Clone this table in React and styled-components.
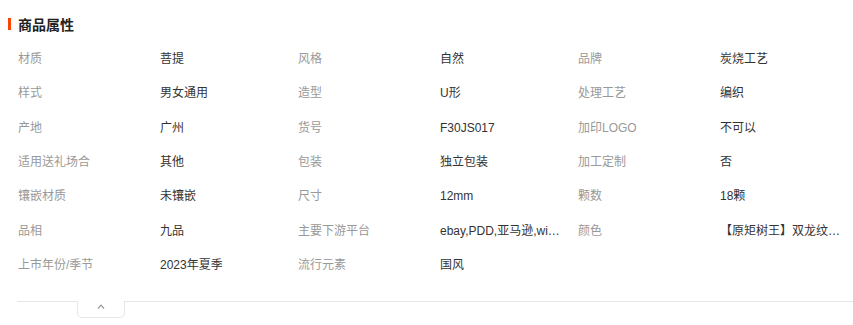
import React from "react";
import styled, { createGlobalStyle } from "styled-components";

const GlobalStyle = createGlobalStyle`
  html, body {
    margin: 0;
    padding: 0;
    background: #fff;
    font-family: "Liberation Sans", "Noto Sans CJK SC", sans-serif;
  }
`;

const Wrapper = styled.div`
  width: 853px;
  padding: 16px 0 0 8px;
  box-sizing: border-box;
  overflow: hidden;
`;

const Title = styled.h3`
  display: flex;
  align-items: center;
  gap: 7px;
  margin: 0;
  height: 16px;
  font-size: 14px;
  font-weight: bold;
  color: #222;
  &::before {
    content: "";
    width: 3px;
    height: 12px;
    background: #ff4400;
  }
`;

const Grid = styled.div`
  display: grid;
  grid-template-columns: repeat(3, 142px 138px);
  margin: 10px 0 0 10px;
`;

const Cell = styled.div`
  height: 34.33px;
  line-height: 34.33px;
  font-size: 12px;
  white-space: nowrap;
  overflow: hidden;
  text-overflow: ellipsis;
  color: ${(p) => (p.$label ? "#999" : "#333")};
  padding-right: ${(p) => (p.$label ? "0" : "16px")};
  box-sizing: border-box;
`;

const Footer = styled.div`
  margin: 19px 0 0 9px;
  border-top: 1px solid #e6e6e6;
  height: 20px;
`;

const Toggle = styled.button`
  display: flex;
  align-items: center;
  justify-content: center;
  margin: -1px 0 0 60px;
  width: 48px;
  height: 17px;
  padding: 0 0 5px;
  background: #fff;
  border: 1px solid #e6e6e6;
  border-top: none;
  border-radius: 0 0 5px 5px;
  cursor: pointer;
`;

const attrs = [
  ["材质", "菩提"],
  ["风格", "自然"],
  ["品牌", "炭烧工艺"],
  ["样式", "男女通用"],
  ["造型", "U形"],
  ["处理工艺", "编织"],
  ["产地", "广州"],
  ["货号", "F30JS017"],
  ["加印LOGO", "不可以"],
  ["适用送礼场合", "其他"],
  ["包装", "独立包装"],
  ["加工定制", "否"],
  ["镶嵌材质", "未镶嵌"],
  ["尺寸", "12mm"],
  ["颗数", "18颗"],
  ["品相", "九品"],
  ["主要下游平台", "ebay,PDD,亚马逊,wish,速卖通"],
  ["颜色", "【原矩树王】双龙纹手串"],
  ["上市年份/季节", "2023年夏季"],
  ["流行元素", "国风"],
];

export default function App() {
  return (
    <>
      <GlobalStyle />
      <Wrapper>
        <Title>商品属性</Title>
        <Grid>
          {attrs.map(([k, v]) => (
            <React.Fragment key={k}>
              <Cell $label>{k}</Cell>
              <Cell title={v}>{v}</Cell>
            </React.Fragment>
          ))}
        </Grid>
        <Footer>
          <Toggle aria-label="收起">
            <svg width="8" height="5" viewBox="0 0 8 5">
              <path d="M1 4.5L4 1.2L7 4.5" fill="none" stroke="#999" strokeWidth="1.2" />
            </svg>
          </Toggle>
        </Footer>
      </Wrapper>
    </>
  );
}
